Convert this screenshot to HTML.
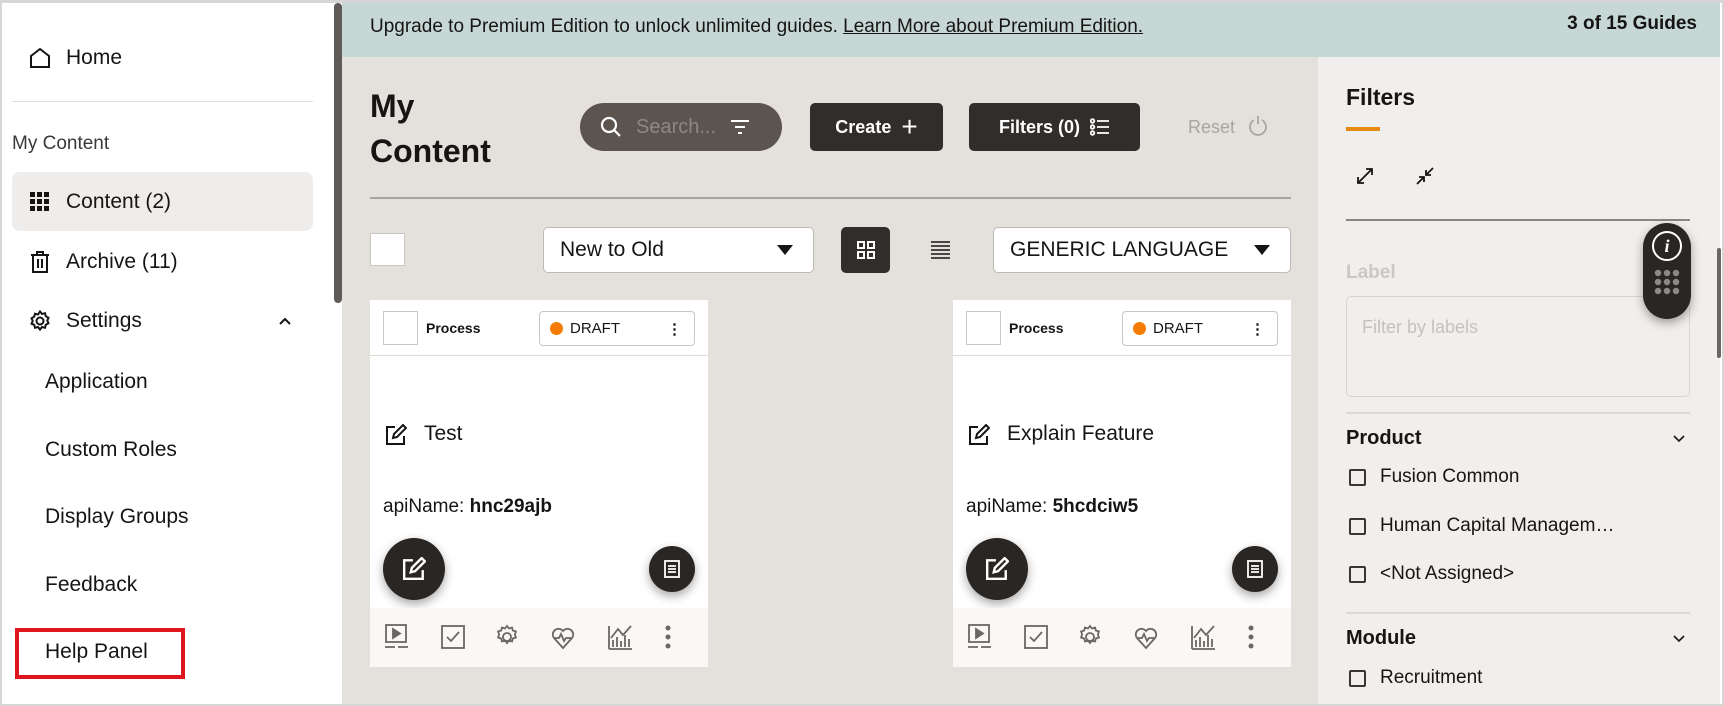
<!DOCTYPE html>
<html><head><meta charset="utf-8"><style>
*{box-sizing:border-box;margin:0;padding:0}
body{width:1724px;height:706px;overflow:hidden;background:#fff;font-family:"Liberation Sans",sans-serif;color:#161513;position:relative}
.a{position:absolute}
.frame{left:0;top:0;width:1724px;height:706px;border:2px solid #d6d6d6;border-top-width:3px;pointer-events:none}
.side{left:2px;top:3px;width:333px;height:702px;background:#fff}
.nav{font-size:21px;line-height:24px}
.main{left:342px;top:3px;width:976px;height:702px;background:#e4e1dd}
.banner{left:342px;top:3px;width:1378px;height:54px;background:#c6d7d6}
.rp{left:1318px;top:57px;width:402px;height:648px;background:#f1efed}
.btn{background:#312d2a;color:#fff;border-radius:5px;font-weight:bold;font-size:18px;display:flex;align-items:center;justify-content:center;gap:10px}
.sel{background:#fff;border:1px solid #bdb9b5;border-radius:5px;font-size:21px;display:flex;align-items:center;padding-left:16px}
.card{background:#fff;width:338px;height:367px;top:300px}
.fab{border-radius:50%;background:#2a2624;box-shadow:0 4px 10px rgba(0,0,0,.35);display:flex;align-items:center;justify-content:center}
.cb{width:17px;height:17px;border:2px solid #3a3633;border-radius:2px}
.hr{height:1px;background:#c9c5c1}
.arr{margin-left:auto;margin-right:20px;width:0;height:0;border-left:8px solid transparent;border-right:8px solid transparent;border-top:10px solid #161513}
</style></head><body>
<div class="a side"></div>
<div class="a" style="left:334px;top:3px;width:8px;height:300px;background:#5e5a57;border-radius:4px"></div>
<svg class="a" style="left:29px;top:47px" width="22" height="22" viewBox="0 0 22 22"><path d="M2 20V9L11 2l9 7v11z" fill="none" stroke="#161513" stroke-width="2"/></svg>
<div class="a nav" style="left:66px;top:46px">Home</div>
<div class="a hr" style="left:12px;top:101px;width:301px;background:#ddd"></div>
<div class="a" style="left:12px;top:133px;font-size:19px;color:#3b3835">My Content</div>
<div class="a" style="left:12px;top:172px;width:301px;height:59px;background:#efedeb;border-radius:8px"></div>
<svg class="a" style="left:30px;top:192px" width="20" height="20" viewBox="0 0 20 20" fill="#161513"><rect x="0" y="0" width="5" height="5"/><rect x="7" y="0" width="5" height="5"/><rect x="14" y="0" width="5" height="5"/><rect x="0" y="7" width="5" height="5"/><rect x="7" y="7" width="5" height="5"/><rect x="14" y="7" width="5" height="5"/><rect x="0" y="14" width="5" height="5"/><rect x="7" y="14" width="5" height="5"/><rect x="14" y="14" width="5" height="5"/></svg>
<div class="a nav" style="left:66px;top:190px">Content (2)</div>
<svg class="a" style="left:30px;top:251px" width="20" height="22" viewBox="0 0 20 22" fill="none" stroke="#161513" stroke-width="2"><path d="M1 4h18M7 4V1h6v3M3 4v17h14V4M8 8v9M12 8v9"/></svg>
<div class="a nav" style="left:66px;top:250px">Archive (11)</div>
<svg class="a" style="left:29px;top:310px" width="22" height="22" viewBox="0 0 22 22" fill="none" stroke="#161513" stroke-width="2"><circle cx="11" cy="11" r="3.5"/><path d="M11 1.5l2 2.5 3-.8.8 3 2.7 1.6-1.2 2.7 1.2 2.7-2.7 1.6-.8 3-3-.8-2 2.5-2-2.5-3 .8-.8-3L2.5 13.7l1.2-2.7L2.5 8.3l2.7-1.6.8-3 3 .8z"/></svg>
<div class="a nav" style="left:66px;top:309px">Settings</div>
<svg class="a" style="left:278px;top:316px" width="14" height="10" viewBox="0 0 14 10"><path d="M2 8l5-5 5 5" fill="none" stroke="#161513" stroke-width="2"/></svg>
<div class="a nav" style="left:45px;top:370px">Application</div>
<div class="a nav" style="left:45px;top:438px">Custom Roles</div>
<div class="a nav" style="left:45px;top:505px">Display Groups</div>
<div class="a nav" style="left:45px;top:573px">Feedback</div>
<div class="a" style="left:15px;top:628px;width:170px;height:51px;border:4px solid #e0161e"></div>
<div class="a nav" style="left:45px;top:640px">Help Panel</div>
<div class="a main"></div>
<div class="a banner"></div>
<div class="a" style="left:370px;top:16px;font-size:19px">Upgrade to Premium Edition to unlock unlimited guides. <span style="text-decoration:underline">Learn More about Premium Edition.</span></div>
<div class="a" style="left:1500px;top:13px;width:197px;text-align:right;font-size:19px;font-weight:bold">3 of 15 Guides</div>
<div class="a" style="left:370px;top:84px;font-size:32px;font-weight:bold;line-height:45px">My<br>Content</div>
<div class="a" style="left:580px;top:103px;width:202px;height:48px;border-radius:24px;background:#5b544f;display:flex;align-items:center;padding-left:20px;gap:14px;color:#8e8782;font-size:20px">
<svg width="22" height="22" viewBox="0 0 22 22" fill="none" stroke="#fff" stroke-width="2.2"><circle cx="9" cy="9" r="7"/><path d="M14 14l6 6"/></svg><span>Search...</span>
<svg width="20" height="16" viewBox="0 0 20 16" stroke="#fff" stroke-width="2"><path d="M1 2h18M5 8h10M8 14h4"/></svg></div>
<div class="a btn" style="left:810px;top:103px;width:133px;height:48px">Create <span style="font-size:28px;font-weight:normal">+</span></div>
<div class="a btn" style="left:969px;top:103px;width:171px;height:48px">Filters (0)
<svg width="20" height="18" viewBox="0 0 20 18" fill="none" stroke="#fff" stroke-width="1.8"><circle cx="2.5" cy="3" r="1.8"/><circle cx="2.5" cy="9" r="1.8"/><circle cx="2.5" cy="15" r="1.8"/><path d="M7 3h12M7 9h12M7 15h12"/></svg></div>
<div class="a" style="left:1188px;top:117px;font-size:18px;color:#a9a5a1">Reset</div>
<svg class="a" style="left:1248px;top:115px" width="20" height="22" viewBox="0 0 20 22" fill="none" stroke="#a9a5a1" stroke-width="1.8"><path d="M6 5a8 8 0 1 0 8 0M10 1v8"/></svg>
<div class="a" style="left:370px;top:197px;width:921px;height:2px;background:#a8a4a0"></div>
<div class="a" style="left:370px;top:233px;width:35px;height:33px;background:#fff;border:1px solid #c9c5c1"></div>
<div class="a sel" style="left:543px;top:227px;width:271px;height:46px">New to Old<span class="arr"></span></div>
<div class="a" style="left:841px;top:227px;width:49px;height:46px;background:#312d2a;border-radius:5px"></div>
<svg class="a" style="left:857px;top:241px" width="18" height="18" viewBox="0 0 18 18" fill="none" stroke="#fff" stroke-width="2"><rect x="1" y="1" width="6" height="6"/><rect x="11" y="1" width="6" height="6"/><rect x="1" y="11" width="6" height="6"/><rect x="11" y="11" width="6" height="6"/></svg>
<svg class="a" style="left:931px;top:240px" width="19" height="19" viewBox="0 0 19 19" stroke="#161513" stroke-width="1.6"><path d="M0 2h19M0 6h19M0 10h19M0 14h19M0 18h19"/></svg>
<div class="a sel" style="left:993px;top:227px;width:298px;height:46px">GENERIC LANGUAGE<span class="arr"></span></div>

<div class="a card" style="left:370px"></div>
<div class="a card" style="left:953px"></div>

<div class="a" style="left:370px;top:300px;width:338px;height:367px">
 <div class="a" style="left:13px;top:11px;width:35px;height:34px;border:1px solid #cbc7c3;background:#fff"></div>
 <div class="a" style="left:56px;top:20px;font-size:14px;font-weight:bold">Process</div>
 <div class="a" style="left:169px;top:11px;width:156px;height:35px;border:1px solid #cbc7c3;border-radius:4px;display:flex;align-items:center;padding-left:10px;font-size:15px;gap:7px"><span style="width:13px;height:13px;border-radius:50%;background:#f57c00;display:inline-block"></span>DRAFT<span style="margin-left:auto;margin-right:12px;font-weight:bold">⋮</span></div>
 <div class="a" style="left:0;top:55px;width:338px;height:1px;background:#dedad6"></div>
 <svg class="a" style="left:15px;top:124px" width="22" height="22" viewBox="0 0 22 22" fill="none" stroke="#161513" stroke-width="2"><path d="M10 3H2v17h17v-8M8 14l1-4 9-9 3 3-9 9z"/></svg>
 <div class="a" style="left:54px;top:122px;font-size:21px">Test</div>
 <div class="a" style="left:13px;top:196px;font-size:19px">apiName: <b>hnc29ajb</b></div>
 <div class="a fab" style="left:13px;top:238px;width:62px;height:62px"><svg width="24" height="24" viewBox="0 0 22 22" fill="none" stroke="#fff" stroke-width="2.2"><path d="M10 3H2v17h17v-8M8 14l1-4 9-9 3 3-9 9z"/></svg></div>
 <div class="a fab" style="left:279px;top:246px;width:46px;height:46px"><svg width="16" height="18" viewBox="0 0 16 18" fill="none" stroke="#fff" stroke-width="1.8"><rect x="1" y="1" width="14" height="16"/><path d="M4 6h8M4 9h8M4 12h8"/></svg></div>
 <div class="a" style="left:0;top:308px;width:338px;height:59px;background:#f9f8f6"></div>
 <svg class="a" style="left:14px;top:322px" width="320" height="30" viewBox="0 0 320 30" fill="none" stroke="#6b6763" stroke-width="1.8">
  <rect x="2" y="3" width="20" height="17"/><path d="M9 7l7 4.5-7 4.5z" fill="#6b6763"/><path d="M1 25h10M14 25h10"/>
  <rect x="58" y="4" width="22" height="22"/><path d="M63 15l4 4 8-9"/>
  <circle cx="123" cy="15" r="4"/><path d="M123 4l2 2.5 3-1 .9 3 3 1-1 3 1 3-3 1-.9 3-3-1-2 2.5-2-2.5-3 1-.9-3-3-1 1-3-1-3 3-1 .9-3 3 1z"/>
  <path d="M179 26l-9-10a5 5 0 0 1 9-7a5 5 0 0 1 9 7z M171 16h4l2-4 3 7 2-3h5"/>
  <path d="M225 27V4M225 27h23M229 25v-7M233 25v-10M237 25v-6M241 25v-12M245 25v-8M227 16l7-9 5 6 8-9"/>
  <circle cx="284" cy="6" r="1.6" fill="#6b6763"/><circle cx="284" cy="15" r="1.6" fill="#6b6763"/><circle cx="284" cy="24" r="1.6" fill="#6b6763"/>
 </svg>
</div>
<div class="a" style="left:953px;top:300px;width:338px;height:367px">
 <div class="a" style="left:13px;top:11px;width:35px;height:34px;border:1px solid #cbc7c3;background:#fff"></div>
 <div class="a" style="left:56px;top:20px;font-size:14px;font-weight:bold">Process</div>
 <div class="a" style="left:169px;top:11px;width:156px;height:35px;border:1px solid #cbc7c3;border-radius:4px;display:flex;align-items:center;padding-left:10px;font-size:15px;gap:7px"><span style="width:13px;height:13px;border-radius:50%;background:#f57c00;display:inline-block"></span>DRAFT<span style="margin-left:auto;margin-right:12px;font-weight:bold">⋮</span></div>
 <div class="a" style="left:0;top:55px;width:338px;height:1px;background:#dedad6"></div>
 <svg class="a" style="left:15px;top:124px" width="22" height="22" viewBox="0 0 22 22" fill="none" stroke="#161513" stroke-width="2"><path d="M10 3H2v17h17v-8M8 14l1-4 9-9 3 3-9 9z"/></svg>
 <div class="a" style="left:54px;top:122px;font-size:21px">Explain Feature</div>
 <div class="a" style="left:13px;top:196px;font-size:19px">apiName: <b>5hcdciw5</b></div>
 <div class="a fab" style="left:13px;top:238px;width:62px;height:62px"><svg width="24" height="24" viewBox="0 0 22 22" fill="none" stroke="#fff" stroke-width="2.2"><path d="M10 3H2v17h17v-8M8 14l1-4 9-9 3 3-9 9z"/></svg></div>
 <div class="a fab" style="left:279px;top:246px;width:46px;height:46px"><svg width="16" height="18" viewBox="0 0 16 18" fill="none" stroke="#fff" stroke-width="1.8"><rect x="1" y="1" width="14" height="16"/><path d="M4 6h8M4 9h8M4 12h8"/></svg></div>
 <div class="a" style="left:0;top:308px;width:338px;height:59px;background:#f9f8f6"></div>
 <svg class="a" style="left:14px;top:322px" width="320" height="30" viewBox="0 0 320 30" fill="none" stroke="#6b6763" stroke-width="1.8">
  <rect x="2" y="3" width="20" height="17"/><path d="M9 7l7 4.5-7 4.5z" fill="#6b6763"/><path d="M1 25h10M14 25h10"/>
  <rect x="58" y="4" width="22" height="22"/><path d="M63 15l4 4 8-9"/>
  <circle cx="123" cy="15" r="4"/><path d="M123 4l2 2.5 3-1 .9 3 3 1-1 3 1 3-3 1-.9 3-3-1-2 2.5-2-2.5-3 1-.9-3-3-1 1-3-1-3 3-1 .9-3 3 1z"/>
  <path d="M179 26l-9-10a5 5 0 0 1 9-7a5 5 0 0 1 9 7z M171 16h4l2-4 3 7 2-3h5"/>
  <path d="M225 27V4M225 27h23M229 25v-7M233 25v-10M237 25v-6M241 25v-12M245 25v-8M227 16l7-9 5 6 8-9"/>
  <circle cx="284" cy="6" r="1.6" fill="#6b6763"/><circle cx="284" cy="15" r="1.6" fill="#6b6763"/><circle cx="284" cy="24" r="1.6" fill="#6b6763"/>
 </svg>
</div>

<div class="a rp"></div>
<div class="a" style="left:1346px;top:84px;font-size:23px;font-weight:bold">Filters</div>
<div class="a" style="left:1346px;top:127px;width:34px;height:4px;background:#e58a12"></div>
<svg class="a" style="left:1355px;top:166px" width="20" height="20" viewBox="0 0 20 20" fill="none" stroke="#161513" stroke-width="1.8"><path d="M3 17L17 3M11 3h6v6M3 11v6h6"/></svg>
<svg class="a" style="left:1415px;top:166px" width="20" height="20" viewBox="0 0 20 20" fill="none" stroke="#161513" stroke-width="1.8"><path d="M2 18l7-7M18 2l-7 7M4 11h5v5M16 9h-5V4"/></svg>
<div class="a" style="left:1346px;top:219px;width:344px;height:2px;background:#8a8682"></div>
<div class="a" style="left:1346px;top:262px;font-size:19px;font-weight:bold;color:#cbc8c4">Label</div>
<div class="a" style="left:1346px;top:296px;width:344px;height:101px;border:1px solid #d8d5d1;border-radius:5px"></div>
<div class="a" style="left:1362px;top:317px;font-size:18px;color:#c5c2be">Filter by labels</div>
<div class="a fab" style="left:1643px;top:223px;width:48px;height:96px;border-radius:24px;flex-direction:column;gap:8px;justify-content:flex-start;padding-top:8px">
<div style="width:30px;height:30px;border:2px solid #fff;border-radius:50%;color:#fff;font:italic bold 18px 'Liberation Serif',serif;text-align:center;line-height:26px">i</div>
<svg width="26" height="26" viewBox="0 0 26 26" fill="#8d8985"><circle cx="4" cy="4" r="3.2"/><circle cx="13" cy="4" r="3.2"/><circle cx="22" cy="4" r="3.2"/><circle cx="4" cy="13" r="3.2"/><circle cx="13" cy="13" r="3.2"/><circle cx="22" cy="13" r="3.2"/><circle cx="4" cy="22" r="3.2"/><circle cx="13" cy="22" r="3.2"/><circle cx="22" cy="22" r="3.2"/></svg></div>
<div class="a hr" style="left:1346px;top:412px;width:344px;height:2px;background:#dcd9d5"></div>
<div class="a" style="left:1346px;top:427px;font-size:20px;font-weight:bold">Product</div>
<svg class="a" style="left:1673px;top:435px" width="12" height="8" viewBox="0 0 12 8"><path d="M1 1l5 5 5-5" fill="none" stroke="#161513" stroke-width="1.6"/></svg>
<div class="a cb" style="left:1349px;top:469px"></div><div class="a" style="left:1380px;top:466px;font-size:19px">Fusion Common</div>
<div class="a cb" style="left:1349px;top:518px"></div><div class="a" style="left:1380px;top:515px;font-size:19px">Human Capital Managem…</div>
<div class="a cb" style="left:1349px;top:566px"></div><div class="a" style="left:1380px;top:563px;font-size:19px">&lt;Not Assigned&gt;</div>
<div class="a hr" style="left:1346px;top:612px;width:344px;height:2px;background:#dcd9d5"></div>
<div class="a" style="left:1346px;top:627px;font-size:20px;font-weight:bold">Module</div>
<svg class="a" style="left:1673px;top:635px" width="12" height="8" viewBox="0 0 12 8"><path d="M1 1l5 5 5-5" fill="none" stroke="#161513" stroke-width="1.6"/></svg>
<div class="a cb" style="left:1349px;top:670px"></div><div class="a" style="left:1380px;top:667px;font-size:19px">Recruitment</div>
<div class="a" style="left:1717px;top:248px;width:4px;height:110px;background:#6a6662;border-radius:2px"></div>
<div class="a frame"></div>
</body></html>
